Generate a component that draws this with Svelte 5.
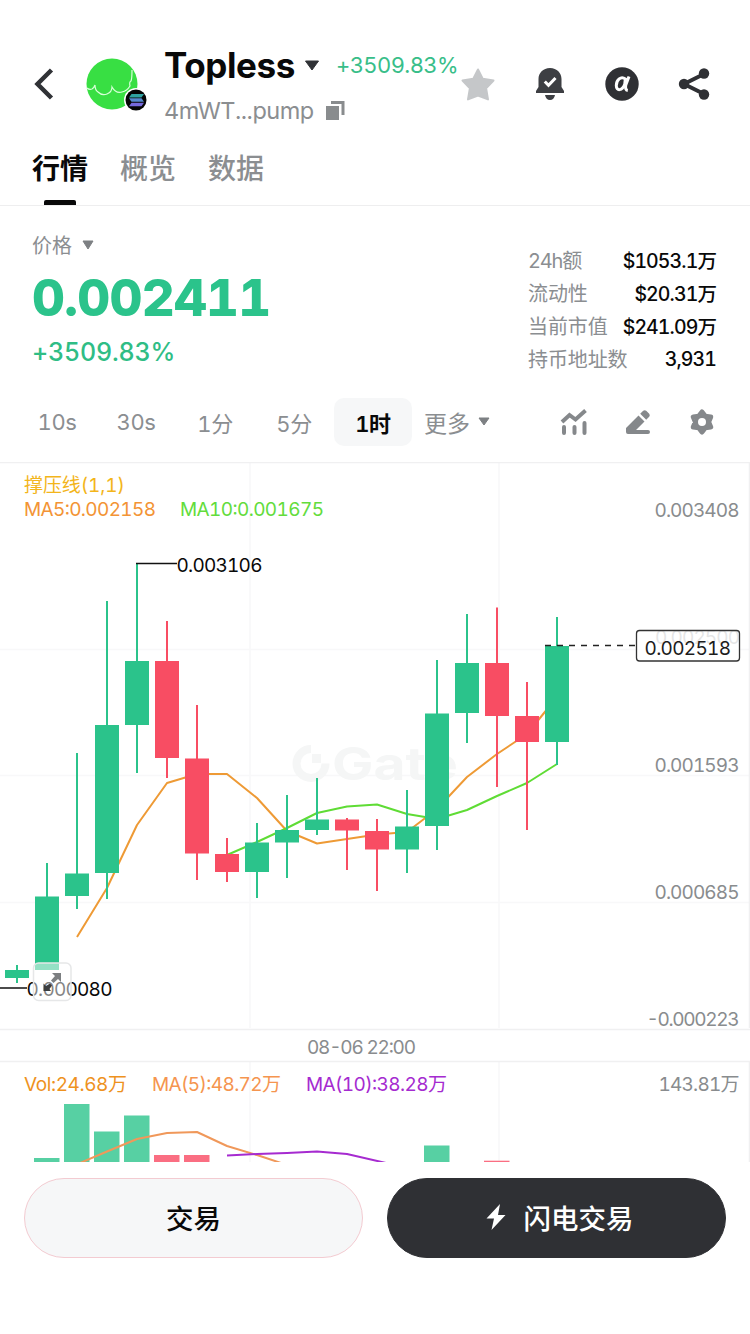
<script>
	const tabs = ["行情", "概览", "数据"];
	let activeTab = $state("行情");

	const stats = [
		{ label: "24h额", value: "$1053.1万" },
		{ label: "流动性", value: "$20.31万" },
		{ label: "当前市值", value: "$241.09万" },
		{ label: "持币地址数", value: "3,931" }
	];

	const periods = ["10s", "30s", "1分", "5分", "1时"];
	let activePeriod = $state("1时");

	// high, low, body top, body bottom, rising
	const candles = [
		[965, 983, 970, 978, true],
		[863, 970, 896.5, 970, true],
		[753, 909, 873.5, 896, true],
		[601, 899, 725, 873, true],
		[563, 773, 661, 725, true],
		[621, 778, 661, 758, false],
		[705, 880, 758.5, 853.5, false],
		[838, 882, 854, 872, false],
		[823, 898, 842.5, 872, true],
		[795, 878, 830, 842.5, true],
		[778, 835, 819.5, 830, true],
		[818, 870, 819.5, 830.5, false],
		[819, 891, 831, 849.5, false],
		[790, 873, 826.5, 849.5, true],
		[660, 850, 713.5, 826, true],
		[614, 743, 663, 713, true],
		[607.5, 787, 663, 716, false],
		[682, 830, 716, 742, false],
		[617, 765, 646, 742, true]
	].map(([high, low, top, bottom, up], i) => ({ x: 17 + i * 30, high, low, top, bottom, up }));

	const volumes = [
		{ x: 47, top: 1158, up: true },
		{ x: 77, top: 1104, up: true },
		{ x: 107, top: 1131.5, up: true },
		{ x: 137, top: 1115.5, up: true },
		{ x: 167, top: 1155, up: false },
		{ x: 197, top: 1155, up: false },
		{ x: 437, top: 1145.5, up: true },
		{ x: 497, top: 1160.7, up: false }
	];

	const axis = [
		{ text: "0.003408", y: 516.5, w: 85 },
		{ text: "0.001593", y: 771.5, w: 85 },
		{ text: "0.000685", y: 898.5, w: 85 },
		{ text: "-0.000223", y: 1025.5, w: 93 }
	];
</script>

<div class="page">
	<header>
		<div class="top">
			<svg class="back" width="22" height="34" viewBox="0 0 22 34"><path d="M18.500 3 4.500 17l14 14" /></svg>
			<div class="avatar">
				<svg width="64" height="60" viewBox="0 0 64 60">
					<circle cx="26" cy="28" r="25.500" fill="#38df43" />
					<path d="M1 32q2 2 5 1q2-1 3-4q0 5 3 7q4 4 9 2q5-2 5-7q4 7 10 5q5-1 8-6q-1-4 1-5q1-2 1-11" fill="none" stroke="#d8ffd8" stroke-width="1.200" />
					<circle cx="50" cy="44" r="12" fill="#fff" />
					<circle cx="50" cy="44" r="10.500" fill="#050505" />
					<path d="M45.500 38H58l-2.500 3.500H43z" fill="#2fa1a0" />
					<path d="M43 42.300h12.500l2.500 3.500H45.500z" fill="#5689cf" />
					<path d="M45.500 46.700H58l-2.500 3.500H43z" fill="#7669dc" />
				</svg>
			</div>
			<div class="token">
				<div class="name-row">
					<h1>Topless</h1>
					<svg width="16" height="11" viewBox="0 0 16 11"><path d="M1.500 1h13L8 10z" fill="#303236" stroke="#303236" stroke-linejoin="round" /></svg>
					<span class="change">+3509.83%</span>
				</div>
				<div class="address">
					<span>4mWT...pump</span>
					<svg width="19" height="19" viewBox="0 0 19 19"><path d="M0 5h13v14H0z" fill="#898c8e" /><path d="M5 1.500h12V14" fill="none" stroke="#898c8e" stroke-width="3" /></svg>
				</div>
			</div>
			<div class="actions">
				<svg width="36" height="36" viewBox="0 0 36 36"><path d="m18 3.500 4.700 9.300 10.800 1.700-7.400 7.700 1.900 11.200L18 29.500 8 33.400l1.900-11.200-7.400-7.700 10.800-1.700z" fill="#c5c7c9" stroke="#c5c7c9" stroke-width="2" stroke-linejoin="round" /></svg>
				<svg width="36" height="36" viewBox="0 0 36 36"><path d="M18 2C11 2 6.500 7 6.500 13v8l-2.500 4v2h28v-2l-2.500-4v-8C29.500 7 25 2 18 2zM13 29h10q-1 5-5 5t-5-5z" fill="#3d3f43" /><path d="m12.800 15.500 3.700 3.800 7-7.300" fill="none" stroke="#fff" stroke-width="3" /></svg>
				<svg width="36" height="36" viewBox="0 0 36 36"><circle cx="18" cy="18" r="16.700" fill="#2f3034" /><path d="M21.300 13C17 9.500 12.300 14 12.300 19.500c0 6 6 5.500 8.500-1.500zM25 10.500l-3.200 8.500q-1 5 2 5.500" fill="none" stroke="#fff" stroke-width="3" /></svg>
				<svg width="36" height="36" viewBox="0 0 36 36"><path d="M28 8 8 18l20 10" fill="none" stroke="#2f3034" stroke-width="4" /><circle cx="28" cy="7.500" r="5.200" fill="#2f3034" /><circle cx="8" cy="18" r="5.200" fill="#2f3034" /><circle cx="28" cy="28.500" r="5.200" fill="#2f3034" /></svg>
			</div>
		</div>
		<nav>
			{#each tabs as tab}
				<button class="tab" class:active={tab === activeTab} onclick={() => (activeTab = tab)}>{tab}</button>
			{/each}
		</nav>
	</header>

	<section class="summary">
		<div>
			<div class="price-label">
				价格
				<svg width="12" height="10" viewBox="0 0 12 10"><path d="M1 1h10L6 9z" fill="#7d8083" stroke="#7d8083" stroke-linejoin="round" /></svg>
			</div>
			<div class="price">0.002411</div>
			<div class="price-change">+3509.83%</div>
		</div>
		<dl>
			{#each stats as stat}
				<div class="stat">
					<dt class:mixed={/\d/.test(stat.label)}>{stat.label}</dt>
					<dd>{stat.value}</dd>
				</div>
			{/each}
		</dl>
	</section>

	<div class="toolbar">
		<div class="periods">
			{#each periods as period}
				<button class="period" class:active={period === activePeriod} onclick={() => (activePeriod = period)}>{period}</button>
			{/each}
		</div>
		<button class="more">
			更多
			<svg width="12" height="9" viewBox="0 0 12 9"><path d="M1 1h10L6 8z" fill="#7d8083" stroke="#7d8083" stroke-linejoin="round" /></svg>
		</button>
		<div class="tools">
			<svg width="28" height="28" viewBox="0 0 28 28" fill="none" stroke="#85888b" stroke-width="4"><path d="m2 14 7.500-7 6 4.500L25.500 2.500" /><path d="M4 19v6M14.500 19v6M24.500 15v10" stroke-linecap="round" /></svg>
			<svg width="28" height="28" viewBox="0 0 28 28" fill="#85888b"><path d="M2 20 14.500 7.500l6 6L12 22h12q2 0 2 2t-2 2H4q-2 0-2-2zM16.200 5.800l3-3q1.500-1.200 3 0l3 3q1.200 1.500 0 3l-3 3z" /></svg>
			<svg width="28" height="28" viewBox="0 0 28 28"><path d="m14 4 3.300 4.300 5.400.7-2.100 5 2.100 5-5.400.7L14 24l-3.300-4.300-5.400-.7 2.100-5-2.100-5 5.400-.7z" fill="#85888b" stroke="#85888b" stroke-width="5" stroke-linejoin="round" /><circle cx="14" cy="14" r="4" fill="#fff" /></svg>
		</div>
	</div>

	<svg class="chart" width="750" height="700" viewBox="0 462 750 700">
		<g class="grid">
			<path d="M250 463V1028M499 463V1028M0 649.500H750M0 775.500H750M0 902.500H750M250 1062V1162M499 1062V1162" />
			<path class="strong" d="M0 462.500H750M0 1029.500H750M0 1061.500H750M749.500 463V1028M749.500 1062V1162" />
		</g>

		<g class="watermark">
			<path d="M311 749a14.500 14.500 0 1 0 14.500 14.500" fill="none" stroke-width="8" />
			<path d="M312 754h9v9h-9z" stroke="none" />
			<text x="332" y="780" textLength="126" lengthAdjust="spacingAndGlyphs" stroke="none">Gate</text>
		</g>

		<polyline class="ma5" points="77,937 107,888 137,825 167,783 197,774 227,774 257,798 287,831 317,843.5 347,839 377,834.5 407,832 437,809 467,777 497,754 527,734 557,697" />
		<polyline class="ma10" points="227,855 257,842 287,828 317,813 347,806.500 377,804.500 407,814 437,819 467,810 497,796 527,783 557,764" />

		{#each candles as c}
			<g class={c.up ? "up" : "down"}>
				<rect x={c.x - 1} y={c.high} width="2" height={c.low - c.high} />
				<rect x={c.x - 12} y={c.top} width="24" height={c.bottom - c.top} />
			</g>
		{/each}

		<text class="support" x="24" y="491.500" textLength="101">撑压线(1,1)</text>
		<text class="label-ma5" x="24" y="515.500" textLength="132">MA5:0.002158</text>
		<text class="label-ma10" x="180" y="515.500" textLength="144">MA10:0.001675</text>

		<path d="M136 563.500H177M0 988H27" stroke="#111" stroke-width="1.500" />
		<text x="176.500" y="571.500" textLength="86">0.003106</text>
		<text x="26.500" y="995.500" textLength="86">0.000080</text>

		{#each axis as a}
			<text class="axis" x={739.5 - a.w} y={a.y} textLength={a.w}>{a.text}</text>
		{/each}
		<text class="axis" x="655" y="644" textLength="85">0.002500</text>
		<path d="M545 645.500H636" stroke="#222" stroke-width="1.300" stroke-dasharray="6 6" />
		<rect x="636.500" y="630.500" width="103" height="30.500" rx="3" fill="#fff" fill-opacity=".78" stroke="#333" stroke-width="1.300" />
		<text class="last" x="644.500" y="654.500" textLength="86.500">0.002518</text>

		<g class="expand">
			<rect x="33.500" y="963" width="37.500" height="37.500" rx="5" fill="#fff" fill-opacity=".5" stroke="#e6e7e8" stroke-width="1.500" />
			<path d="M52 973h9v9l-3-3-4.500 4-2.500-2.500 4-4.500z" fill="#7c7f81" />
			<path d="M43.500 983.500l2.500 2.500 4-2.500 2 2-2.500 3.500 1.500 2h-7.500z" fill="#3c3e40" />
		</g>

		<text class="axis" x="307" y="1053.500" textLength="109">08-06 22:00</text>

		{#each volumes as v}
			<rect class={v.up ? "vol-up" : "vol-down"} x={v.x - 13} y={v.top} width="25.500" height={1162 - v.top} />
		{/each}
		<polyline points="80,1163 107,1151.500 137,1139 167,1133 197,1132 227,1146 257,1155 281,1163" class="vol-ma5" />
		<polyline points="227,1155.500 257,1154 287,1153 317,1151.500 347,1154 386,1163" class="vol-ma10" />
		<text class="label-vol" x="24" y="1090.500" textLength="103">Vol:24.68万</text>
		<text class="label-vol5" x="152" y="1090.500" textLength="129">MA(5):48.72万</text>
		<text class="label-vol10" x="306" y="1090.500" textLength="141">MA(10):38.28万</text>
		<text class="axis" x="658.500" y="1090.500" textLength="81">143.81万</text>
	</svg>

	<footer>
		<button class="trade">交易</button>
		<button class="trade flash">
			<svg width="20" height="28" viewBox="0 0 20 28"><path d="M14 1 .5 15.500h7.500L5.500 27 19.500 12H12z" fill="#fff" /></svg>
			闪电交易
		</button>
	</footer>
</div>

<style>
	:global(body) { background: #fff; }

	.page {
		width: 750px;
		height: 1334px;
		overflow: hidden;
		background: #fff;
		color: #090909;
		font-family: Inter, "Noto Sans CJK SC", sans-serif;
		font-variant-numeric: tabular-nums;
	}

	button { border: 0; padding: 0; margin: 0; background: none; font: inherit; color: inherit; }
	svg { display: block; flex: none; }

	/* Header */
	header { height: 205px; border-bottom: 1px solid #eeeeef; }
	.top { display: flex; height: 86px; padding-top: 40px; }
	.back { margin: 27px 0 0 33px; fill: none; stroke: #303236; stroke-width: 4.500; }
	.avatar { margin: 16px 0 0 31px; }
	.token { flex: none; width: 292px; margin-left: 14px; white-space: nowrap; }
	.name-row { display: flex; align-items: center; height: 50px; }
	h1 { flex: none; width: 140px; margin: 0; font-size: 35px; font-weight: 700; letter-spacing: -0.4px; }
	.change { flex: none; margin-left: 16px; font-size: 22px; letter-spacing: -0.6px; color: #38be89; }
	.address { display: flex; align-items: center; gap: 12px; height: 40px; font-size: 23.500px; letter-spacing: -0.5px; color: #8b8e91; }
	.actions { display: flex; gap: 36px; margin: 26px 0 0 4px; }

	nav { display: flex; gap: 32px; padding-left: 32px; height: 79px; }
	.tab { position: relative; height: 79px; padding-top: 3px; font-size: 28px; font-weight: 500; color: #8b8e91; }
	.tab.active { color: #090909; font-weight: 700; }
	.tab.active::after {
		content: "";
		position: absolute;
		left: 12px;
		bottom: 0;
		width: 32px;
		height: 5px;
		border-radius: 2px 2px 0 0;
		background: #090909;
	}

	/* Price and stats */
	.summary { display: flex; justify-content: space-between; height: 190px; padding: 0 34px 0 32px; }
	.price-label { display: flex; align-items: center; gap: 10px; margin-top: 23px; height: 31px; font-size: 20px; color: #8b8e91; }
	.price { height: 76px; line-height: 76px; font-size: 51px; font-weight: 800; letter-spacing: -0.700px; color: #2bc38b; }
	.price-change { height: 32px; line-height: 33px; font-size: 25px; font-weight: 500; letter-spacing: -0.2px; color: #2fbd85; }
	dl { width: 188px; margin: 37px 0 0; }
	.stat { display: flex; justify-content: space-between; align-items: center; height: 33px; white-space: nowrap; }
	dt { font-size: 20px; letter-spacing: -0.1px; color: #8b8e91; }
	dt.mixed { letter-spacing: -1.200px; }
	dd { margin: 0; font-size: 19.500px; font-weight: 550; letter-spacing: -0.900px; }

	/* Period bar */
	.toolbar { display: flex; align-items: center; height: 66px; padding: 0 34px 0 18px; font-size: 22px; color: #8b8e91; }
	.periods { display: flex; gap: 1px; margin-top: -14px; }
	.period { width: 78px; height: 48px; border-radius: 10px; letter-spacing: -0.4px; }
	.period.active { background: #f6f7f8; color: #090909; font-weight: 600; }
	.more { display: flex; align-items: center; gap: 8px; margin: -15px 0 0 12px; font-size: 23px; }
	.tools { display: flex; gap: 36px; margin: -14px 0 0 auto; }

	/* Chart */
	.chart text { font-size: 19px; fill: #090909; }
	.chart .axis { fill: #898c8e; }
	.chart .last { fill: #1c1c1c; }
	.chart .support { fill: #f3b51b; }
	.chart .label-ma5 { fill: #f39435; }
	.chart .label-ma10 { fill: #63dc3c; }
	.chart .label-vol { fill: #ee921e; }
	.chart .label-vol5 { fill: #f5954f; }
	.chart .label-vol10 { fill: #a52bd0; }
	.grid path { fill: none; stroke: #f8f8f9; stroke-width: 1.500; }
	.grid .strong { stroke: #f0f0f1; }
	.watermark { fill: #f5f6f6; stroke: #f5f6f6; }
	.chart .watermark text { font-size: 45px; font-weight: 700; fill: #f5f6f6; }
	polyline { fill: none; stroke-width: 2; stroke-linejoin: round; }
	.ma5 { stroke: #ee9a35; }
	.ma10 { stroke: #5fdc35; }
	.up { fill: #2bc38b; }
	.down { fill: #f84d63; }
	.vol-up { fill: #57d0a3; }
	.vol-down { fill: #fa6e82; }
	.vol-ma5 { stroke: #f0985a; }
	.vol-ma10 { stroke: #a62bd0; }

	/* Bottom actions */
	footer { display: flex; gap: 24px; padding: 16px 24px; }
	.trade {
		display: flex;
		align-items: center;
		justify-content: center;
		gap: 18px;
		box-sizing: border-box;
		width: 339px;
		height: 80px;
		padding-bottom: 2px;
		border: 1px solid #f3cbd1;
		border-radius: 40px;
		background: #f6f7f8;
		font-size: 27.500px;
		font-weight: 500;
	}
	.flash { padding-left: 6px; border-color: #2f3034; background: #2f3034; color: #fff; }
</style>
